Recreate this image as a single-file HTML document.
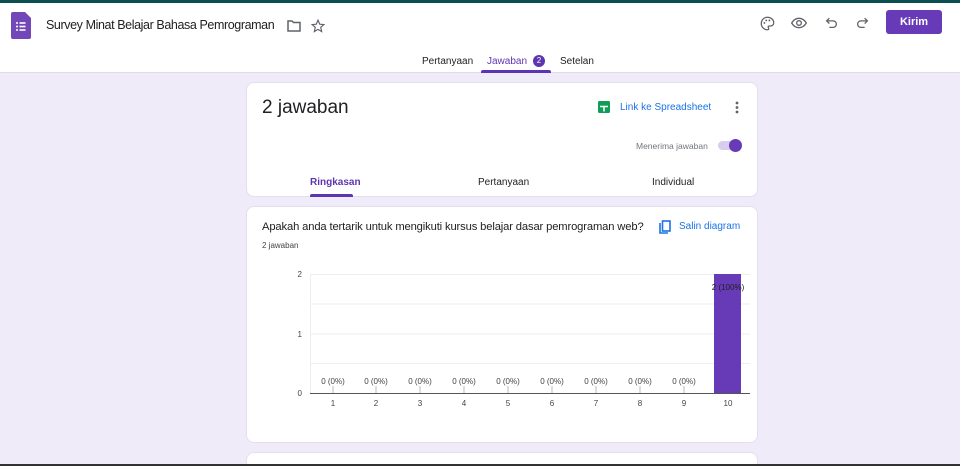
<!DOCTYPE html>
<html><head><meta charset="utf-8"><style>
*{margin:0;padding:0;box-sizing:border-box}
html,body{width:960px;height:466px;overflow:hidden}
body{background:#f0ebf8;font-family:"Liberation Sans",Arial,sans-serif;color:#202124;position:relative}
.top{position:absolute;left:0;top:0;width:960px;height:3px;background:#0b4f52}
.hdr{position:absolute;left:0;top:3px;width:960px;height:70px;background:#fff;border-bottom:1px solid #e0dce8}
.abs{position:absolute}
.card{position:absolute;left:246px;width:512px;background:#fff;border-radius:8px;border:1px solid #e3dff0}
.t{position:absolute;white-space:nowrap}
</style></head><body>
<div class="top"></div>
<div class="hdr">
 <svg class="abs" style="left:11px;top:9px" width="20" height="27" viewBox="0 0 20 27"><path d="M2 0h12l6 6v19a2 2 0 0 1-2 2H2a2 2 0 0 1-2-2V2a2 2 0 0 1 2-2z" fill="#7248b9"/><g fill="#fff"><circle cx="6" cy="11" r="1"/><circle cx="6" cy="14.5" r="1"/><circle cx="6" cy="18" r="1"/><rect x="8.5" y="10.2" width="6" height="1.6"/><rect x="8.5" y="13.7" width="6" height="1.6"/><rect x="8.5" y="17.2" width="6" height="1.6"/></g></svg>
 <div class="t" style="left:46px;top:15px;font-size:12.5px;letter-spacing:-0.4px">Survey Minat Belajar Bahasa Pemrograman</div>
 <svg class="abs" style="left:287px;top:17px" width="14" height="12" viewBox="0 0 14 12"><path d="M1 1h4l1.5 1.5H13v8.5H1z" fill="none" stroke="#5f6368" stroke-width="1.5"/></svg>
 <svg class="abs" style="left:311px;top:16px" width="14" height="14" viewBox="0 0 24 24"><path d="M12 2l3 7 7 .6-5.3 4.7 1.6 7.2L12 17.8 5.7 21.5l1.6-7.2L2 9.6 9 9z" fill="none" stroke="#5f6368" stroke-width="2"/></svg>
 <svg class="abs" style="left:760px;top:13px" width="15" height="15" viewBox="0 0 24 24"><path d="M12 2a10 10 0 0 0 0 20c1.5 0 2-1 2-2s-1-1.5-1-2.5 1-1.5 2-1.5h2a5 5 0 0 0 5-5C22 6 17.5 2 12 2z" fill="none" stroke="#5f6368" stroke-width="2"/><circle cx="7" cy="11" r="1.5" fill="#5f6368"/><circle cx="10" cy="7" r="1.5" fill="#5f6368"/><circle cx="15" cy="7" r="1.5" fill="#5f6368"/></svg>
 <svg class="abs" style="left:791px;top:14px" width="16" height="12" viewBox="0 0 24 16"><path d="M1 8C4 3 8 1 12 1s8 2 11 7c-3 5-7 7-11 7S4 13 1 8z" fill="none" stroke="#5f6368" stroke-width="2"/><circle cx="12" cy="8" r="3.5" fill="none" stroke="#5f6368" stroke-width="2"/></svg>
 <svg class="abs" style="left:825px;top:13px" width="13" height="13" viewBox="0 0 24 24"><path d="M8 4L3 9l5 5M3 9h12a6 6 0 0 1 0 12H8" fill="none" stroke="#5f6368" stroke-width="2.4"/></svg>
 <svg class="abs" style="left:856px;top:13px" width="13" height="13" viewBox="0 0 24 24"><path d="M16 4l5 5-5 5M21 9H9a6 6 0 0 0 0 12h7" fill="none" stroke="#5f6368" stroke-width="2.4"/></svg>
 <div class="abs" style="left:886px;top:7px;width:56px;height:24px;background:#673ab7;border-radius:3px;color:#fff;font-size:11px;font-weight:bold;text-align:center;line-height:25px">Kirim</div>
 <div class="t" style="left:422px;top:53px;font-size:10px;color:#202124">Pertanyaan</div>
 <div class="t" style="left:487px;top:53px;font-size:10px;color:#5e35b1">Jawaban</div>
 <div class="abs" style="left:533px;top:52px;width:12px;height:12px;border-radius:6px;background:#5e35b1;color:#fff;font-size:8px;text-align:center;line-height:12px">2</div>
 <div class="abs" style="left:481px;top:67px;width:70px;height:3px;background:#5e35b1;border-radius:2px 2px 0 0"></div>
 <div class="t" style="left:560px;top:53px;font-size:10px">Setelan</div>
</div>

<div class="card" style="top:82px;height:115px">
 <div class="t" style="left:15px;top:14px;font-size:19px">2 jawaban</div>
 <svg class="abs" style="left:351px;top:18px" width="12" height="12" viewBox="0 0 12 12"><rect width="12" height="12" rx="1.5" fill="#0f9d58"/><path d="M2 5.5h8M6 5.5v5" stroke="#fff" stroke-width="1.5"/></svg>
 <div class="t" style="left:373px;top:19px;font-size:10px;color:#1a73e8">Link ke Spreadsheet</div>
 <svg class="abs" style="left:488px;top:18px" width="4" height="13"><circle cx="2" cy="2" r="1.4" fill="#5f6368"/><circle cx="2" cy="6.5" r="1.4" fill="#5f6368"/><circle cx="2" cy="11" r="1.4" fill="#5f6368"/></svg>
 <div class="t" style="left:389px;top:58px;font-size:8.5px;color:#70757a">Menerima jawaban</div>
 <div class="abs" style="left:471px;top:58px;width:22px;height:9px;border-radius:5px;background:#d7cdec"></div>
 <div class="abs" style="left:482px;top:56px;width:13px;height:13px;border-radius:7px;background:#673ab7"></div>
 <div class="t" style="left:63px;top:94px;font-size:10px;font-weight:bold;color:#5e35b1">Ringkasan</div>
 <div class="abs" style="left:63px;top:111px;width:43px;height:3px;background:#5e35b1;border-radius:2px 2px 0 0"></div>
 <div class="t" style="left:231px;top:94px;font-size:10px">Pertanyaan</div>
 <div class="t" style="left:405px;top:94px;font-size:10px">Individual</div>
</div>

<div class="card" style="top:206px;height:237px">
 <div class="t" style="left:15px;top:14px;font-size:11.2px;letter-spacing:-0.13px">Apakah anda tertarik untuk mengikuti kursus belajar dasar pemrograman web?</div>
 <svg class="abs" style="left:412px;top:13px" width="12" height="14" viewBox="0 0 12 14"><path d="M1 3v10h8" fill="none" stroke="#1a73e8" stroke-width="1.6"/><rect x="3.5" y="1" width="7.5" height="10" fill="none" stroke="#1a73e8" stroke-width="1.6"/></svg>
 <div class="t" style="left:432px;top:14px;font-size:10px;color:#1a73e8">Salin diagram</div>
 <div class="t" style="left:15px;top:34px;font-size:8px;color:#444">2 jawaban</div>
</div>
<svg class="abs" style="left:0;top:0" width="960" height="466">
 <g stroke="#eee" stroke-width="1"><line x1="310" y1="274.5" x2="750" y2="274.5"/><line x1="310" y1="304" x2="750" y2="304"/><line x1="310" y1="334" x2="750" y2="334"/><line x1="310" y1="363.5" x2="750" y2="363.5"/><line x1="310.5" y1="274" x2="310.5" y2="393"/></g>
 <g font-family="Liberation Sans" font-size="8" fill="#444" text-anchor="end"><text x="302" y="277">2</text><text x="302" y="337">1</text><text x="302" y="396">0</text></g>
 <rect x="714" y="274" width="27" height="119" fill="#673ab7"/>
 <line x1="310" y1="393.5" x2="750" y2="393.5" stroke="#555"/>
 <g font-family="Liberation Sans" font-size="8" fill="#444" text-anchor="middle">
  <text x="333" y="406">1</text><text x="376" y="406">2</text><text x="420" y="406">3</text><text x="464" y="406">4</text><text x="508" y="406">5</text><text x="552" y="406">6</text><text x="596" y="406">7</text><text x="640" y="406">8</text><text x="684" y="406">9</text><text x="728" y="406">10</text>
  <text x="333" y="384">0 (0%)</text><text x="376" y="384">0 (0%)</text><text x="420" y="384">0 (0%)</text><text x="464" y="384">0 (0%)</text><text x="508" y="384">0 (0%)</text><text x="552" y="384">0 (0%)</text><text x="596" y="384">0 (0%)</text><text x="640" y="384">0 (0%)</text><text x="684" y="384">0 (0%)</text>
  <text x="728" y="290" fill="#222">2 (100%)</text>
 </g>
 <g stroke="#bbb"><line x1="333" y1="386" x2="333" y2="393"/><line x1="376" y1="386" x2="376" y2="393"/><line x1="420" y1="386" x2="420" y2="393"/><line x1="464" y1="386" x2="464" y2="393"/><line x1="508" y1="386" x2="508" y2="393"/><line x1="552" y1="386" x2="552" y2="393"/><line x1="596" y1="386" x2="596" y2="393"/><line x1="640" y1="386" x2="640" y2="393"/><line x1="684" y1="386" x2="684" y2="393"/></g>
</svg>
<div class="card" style="top:452px;height:12px;border-bottom:none;border-radius:8px 8px 0 0"></div>
<div class="abs" style="left:0;top:464px;width:960px;height:2px;background:#333"></div>
</body></html>
